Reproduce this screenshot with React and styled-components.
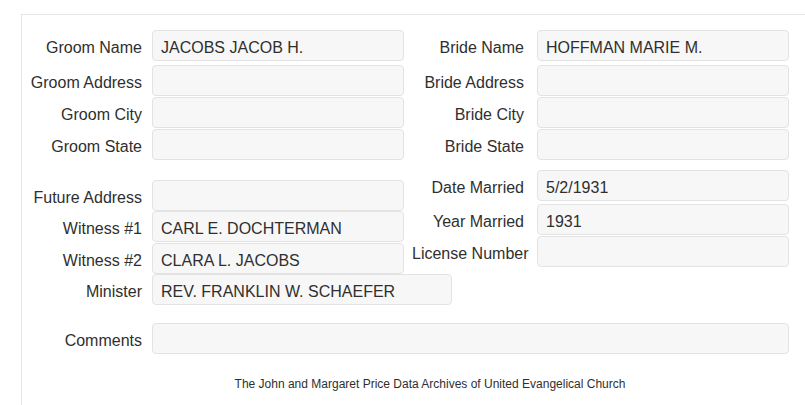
import React from "react";
import styled, { createGlobalStyle } from "styled-components";

const GlobalStyle = createGlobalStyle`
  html, body {
    margin: 0;
    padding: 0;
    background: #ffffff;
    overflow: hidden;
  }
  body {
    font-family: "Liberation Sans", Arial, Helvetica, sans-serif;
    color: #333333;
  }
`;

const Panel = styled.div`
  margin: 14px 0 0 21px;
  width: 817px;
  min-height: 400px;
  box-sizing: border-box;
  border-top: 1px solid #e6e6e6;
  border-left: 1px solid #e6e6e6;
  padding-top: 15px;
`;

const Section = styled.div`
  display: flex;
  align-items: flex-start;
`;

const Column = styled.div`
  display: flex;
  flex-direction: column;
  width: ${(p) => p.$width}px;
  margin-left: ${(p) => p.$offset || 0}px;
`;

const Field = styled.div`
  display: flex;
  align-items: flex-start;
  margin-top: ${(p) => p.$mt || 0}px;
`;

const Label = styled.div`
  flex: none;
  box-sizing: border-box;
  width: ${(p) => p.$width}px;
  height: 31px;
  padding-top: 4px;
  padding-right: ${(p) => p.$gap}px;
  font-size: 16px;
  line-height: 27px;
  text-align: right;
  white-space: nowrap;
  color: #2f2f2f;
`;

const Value = styled.div`
  flex: none;
  box-sizing: border-box;
  width: ${(p) => p.$width}px;
  height: 31px;
  padding: 3px 8px 0;
  border: 1px solid #e3e3e3;
  border-radius: 4px;
  background: #f7f7f7;
  font-size: 16px;
  line-height: 27px;
  white-space: nowrap;
  color: #2f2f2f;
`;

const Footer = styled.div`
  margin-top: 22px;
  font-size: 12px;
  line-height: 17px;
  text-align: center;
  color: #2f2f2f;
`;

const LEFT = { label: 130, gap: 10, input: 252 };
const RIGHT = { label: 125, gap: 13, input: 252 };

function Row({ label, value = "", mt, cfg, inputWidth }) {
  return (
    <Field $mt={mt}>
      <Label $width={cfg.label} $gap={cfg.gap}>
        {label}
      </Label>
      <Value $width={inputWidth || cfg.input}>{value}</Value>
    </Field>
  );
}

export default function App() {
  return (
    <>
      <GlobalStyle />
      <Panel>
        <Section>
          <Column $width={382}>
            <Row cfg={LEFT} label="Groom Name" value="JACOBS JACOB H." />
            <Row cfg={LEFT} label="Groom Address" mt={4} />
            <Row cfg={LEFT} label="Groom City" mt={1} />
            <Row cfg={LEFT} label="Groom State" mt={1} />
          </Column>
          <Column $width={390} $offset={8}>
            <Row cfg={RIGHT} label="Bride Name" value="HOFFMAN MARIE M." />
            <Row cfg={RIGHT} label="Bride Address" mt={4} />
            <Row cfg={RIGHT} label="Bride City" mt={1} />
            <Row cfg={RIGHT} label="Bride State" mt={1} />
          </Column>
        </Section>
        <Section>
          <Column $width={382}>
            <Row cfg={LEFT} label="Future Address" mt={20} />
            <Row cfg={LEFT} label="Witness #1" value="CARL E. DOCHTERMAN" />
            <Row cfg={LEFT} label="Witness #2" value="CLARA L. JACOBS" mt={1} />
          </Column>
          <Column $width={390} $offset={8}>
            <Row cfg={RIGHT} label="Date Married" value="5/2/1931" mt={10} />
            <Row cfg={RIGHT} label="Year Married" value="1931" mt={3} />
            <Row cfg={RIGHT} label="License Number" mt={1} />
          </Column>
        </Section>
        <Row
          cfg={LEFT}
          label="Minister"
          value="REV. FRANKLIN W. SCHAEFER"
          inputWidth={300}
        />
        <Row cfg={LEFT} label="Comments" mt={18} inputWidth={637} />
        <Footer>
          The John and Margaret Price Data Archives of United Evangelical Church
        </Footer>
      </Panel>
    </>
  );
}
